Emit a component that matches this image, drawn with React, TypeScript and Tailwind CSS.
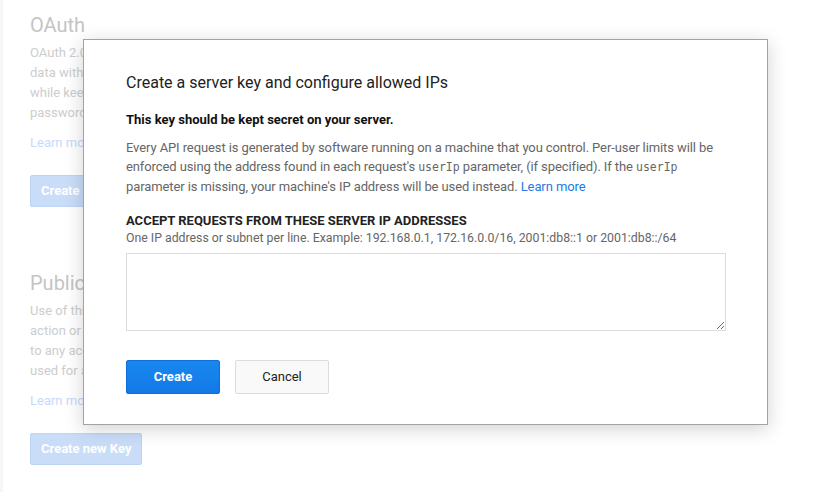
import React from "react";

function FadedSection({
  title,
  lines,
  button,
  className,
}: {
  title: string;
  lines: string[];
  button: string;
  className?: string;
}) {
  return (
    <section className={className}>
      <h2 className="text-[20px] leading-6 text-[#c4c4c4]">{title}</h2>
      <p className="mt-[6px] text-[13px] leading-5 text-[#cdcdcd]">
        {lines.map((line) => (
          <span key={line} className="block whitespace-nowrap">
            {line}
          </span>
        ))}
      </p>
      <a className="mt-[10px] block text-[13px] leading-5 text-[#c5dafa]">
        Learn more
      </a>
      <button
        type="button"
        className="mt-[22px] h-[32px] rounded-[2px] border border-[#bdd4f6] bg-[#c9ddf9] px-[10px] text-[13px] font-bold text-white"
      >
        {button}
      </button>
    </section>
  );
}

function ServerKeyDialog() {
  return (
    <div className="absolute left-[80px] top-[39px] w-[685px] border border-[#a3a3a3] bg-white pb-[30px] pl-[42px] pr-[41px] pt-[33px] shadow-[0_4px_18px_rgba(0,0,0,0.18)]">
      <h1 className="text-[16px] leading-5 text-[#222]">
        Create a server key and configure allowed IPs
      </h1>
      <p className="mt-[17px] text-[13px] font-bold leading-[19px] text-[#111]">
        This key should be kept secret on your server.
      </p>
      <p className="mt-[9px] text-[13px] leading-[19px] tracking-[-0.1px] text-[#666]">
        Every API request is generated by software running on a machine that
        you control. Per-user limits will be
        <br />
        enforced using the address found in each request's{" "}
        <code className="font-['DejaVu_Sans_Mono',monospace] text-[11.5px] tracking-normal">
          userIp
        </code>{" "}
        parameter, (if specified). If the{" "}
        <code className="font-['DejaVu_Sans_Mono',monospace] text-[11.5px] tracking-normal">
          userIp
        </code>
        <br />
        parameter is missing, your machine's IP address will be used instead.{" "}
        <a className="text-[#247be6]">Learn more</a>
      </p>
      <h3 className="mt-[17px] text-[13px] font-bold leading-4 text-[#222]">
        ACCEPT REQUESTS FROM THESE SERVER IP ADDRESSES
      </h3>
      <p className="mt-[1px] text-[12.3px] leading-4 text-[#666]">
        One IP address or subnet per line. Example: 192.168.0.1,
        172.16.0.0/16, 2001:db8::1 or 2001:db8::/64
      </p>
      <textarea className="mt-[7px] block h-[78px] w-[600px] border border-[#dcdcdc] bg-white p-2 text-[13px] outline-none" />
      <div className="mt-[29px] flex gap-[15px]">
        <button
          type="button"
          className="h-[34px] w-[94px] rounded-[2px] border border-[#0e6fd9] bg-gradient-to-b from-[#1987f0] to-[#1379e6] text-[13px] font-bold text-white"
        >
          Create
        </button>
        <button
          type="button"
          className="h-[34px] w-[94px] rounded-[2px] border border-[#dcdcdc] bg-[#f9f9f9] text-[13px] text-[#222]"
        >
          Cancel
        </button>
      </div>
    </div>
  );
}

export default function App() {
  return (
    <div className="relative h-[492px] w-[814px] overflow-hidden border-l-[3px] border-[#f6f6f6] bg-white font-['Roboto','Noto_Sans',sans-serif]">
      <div className="pl-[27px] pt-[13px]">
        <FadedSection
          title="OAuth"
          lines={[
            "OAuth 2.0 allows users to share specific",
            "data with you (for example, contact lists)",
            "while keeping their usernames,",
            "passwords, and other information private.",
          ]}
          button="Create new Client ID"
        />
        <FadedSection
          className="mt-[64px]"
          title="Public API access"
          lines={[
            "Use of this key does not require any user",
            "action or consent, does not grant access",
            "to any account information, and is not",
            "used for authorization.",
          ]}
          button="Create new Key"
        />
      </div>
      <ServerKeyDialog />
    </div>
  );
}
